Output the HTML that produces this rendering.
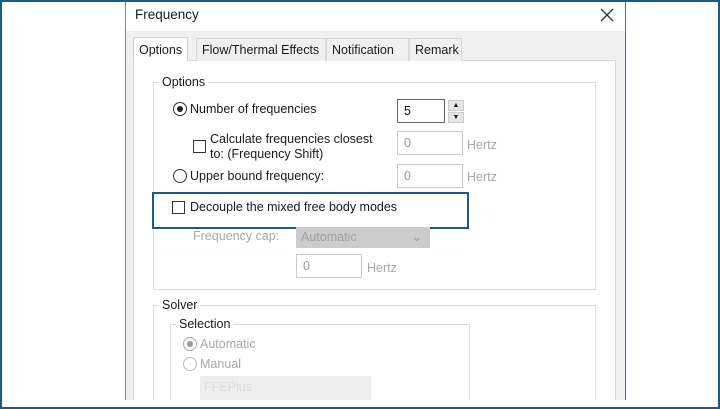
<!DOCTYPE html>
<html style="width:720px;height:409px;overflow:hidden"><head><meta charset="utf-8"><style>
*{margin:0;padding:0;box-sizing:border-box}
body{width:720px;height:409px;background:#fff;position:relative;overflow:hidden;font-family:"Liberation Sans","DejaVu Sans",sans-serif;font-size:12.5px;color:#1a1a1a}
.a{position:absolute}
.frame{left:0;top:0;width:720px;height:409px;border:2px solid #1d5a8c}
.dlg{left:125px;top:2px;width:501px;height:405px;border-left:1px solid #8a8a8a;border-right:1px solid #5a6a7a;background:#f0f0f0}
.title{left:0;top:0;width:499px;height:29px;background:#fff}
.tab{top:38px;height:23px;border:1px solid #d9d9d9;border-bottom:none;background:#f0f0f0;padding:4px 5px 0;font-size:12.5px}
.panel{left:133px;top:60px;width:483px;height:340px;background:#fff;border:1px solid #d9d9d9;border-bottom:none}
.gb{border:1px solid #dcdcdc}
.lg{background:#fff;padding:0 3px}
.rad{width:14px;height:14px;border:1.5px solid #333;border-radius:50%;background:#fff}
.chk{width:13px;height:13px;border:1px solid #333;background:#fff}
.inp{height:24px;border:1px solid #ccc;background:#fff;color:#999;padding:4px 6px}
.gray{color:#a8a8a8}
</style></head><body>
<div class="a dlg">
 <div class="a title"></div>
 <div class="a" style="left:9px;top:5px;font-size:13.5px">Frequency</div>
 <svg class="a" style="left:474px;top:6px" width="14" height="14" viewBox="0 0 14 14"><path d="M1 1L13 13M13 1L1 13" stroke="#333" stroke-width="1.3"/></svg>
</div>
<div class="a panel"></div>
<div class="a tab" style="left:133px;top:37px;height:24px;background:#fff;border-color:#d0d0d0;padding-top:5px">Options</div>
<div class="a tab" style="left:196px;width:130px">Flow/Thermal Effects</div>
<div class="a tab" style="left:326px;width:83px">Notification</div>
<div class="a tab" style="left:409px;width:53px">Remark</div>

<div class="a gb" style="left:153px;top:82px;width:443px;height:208px"></div>
<div class="a lg" style="left:159px;top:75px">Options</div>
<div class="a rad" style="left:173px;top:102px"><div class="a" style="left:2.5px;top:2.5px;width:6px;height:6px;border-radius:50%;background:#222"></div></div>
<div class="a" style="left:190px;top:102px">Number of frequencies</div>
<div class="a inp" style="left:397px;top:99px;width:48px;border-color:#666;color:#111">5</div>
<div class="a" style="left:448px;top:100px;width:16px;height:11px;background:#e5e5e5;border:1px solid #ccc;font-size:7px;text-align:center;line-height:9px">▲</div>
<div class="a" style="left:448px;top:112px;width:16px;height:11px;background:#e5e5e5;border:1px solid #ccc;font-size:7px;text-align:center;line-height:9px">▼</div>
<div class="a chk" style="left:193px;top:140px"></div>
<div class="a" style="left:210px;top:132px;line-height:15px">Calculate frequencies closest<br>to: (Frequency Shift)</div>
<div class="a inp" style="left:397px;top:131px;width:66px">0</div>
<div class="a gray" style="left:467px;top:138px">Hertz</div>
<div class="a rad" style="left:173px;top:169px"></div>
<div class="a" style="left:190px;top:169px">Upper bound frequency:</div>
<div class="a inp" style="left:397px;top:164px;width:66px">0</div>
<div class="a gray" style="left:467px;top:170px">Hertz</div>
<div class="a" style="left:152px;top:192px;width:317px;height:37px;background:#fff;border:2px solid #1d5a8c"></div>
<div class="a chk" style="left:172px;top:201px"></div>
<div class="a" style="left:190px;top:200px">Decouple the mixed free body modes</div>
<div class="a gray" style="left:193px;top:229px">Frequency cap:</div>
<div class="a" style="left:296px;top:227px;width:134px;height:21px;background:#ccc;color:#a0a0a0;padding:3px 5px">Automatic<span style="position:absolute;right:8px;top:2px">⌄</span></div>
<div class="a inp" style="left:296px;top:254px;width:66px">0</div>
<div class="a gray" style="left:367px;top:261px">Hertz</div>

<div class="a gb" style="left:153px;top:305px;width:443px;height:95px;border-bottom:none"></div>
<div class="a lg" style="left:159px;top:298px">Solver</div>
<div class="a gb" style="left:170px;top:324px;width:300px;height:76px;border-bottom:none"></div>
<div class="a lg" style="left:176px;top:317px">Selection</div>
<div class="a rad" style="left:183px;top:337px;border-color:#aaa"><div class="a" style="left:2.5px;top:2.5px;width:6px;height:6px;border-radius:50%;background:#999"></div></div>
<div class="a gray" style="left:200px;top:337px">Automatic</div>
<div class="a rad" style="left:183px;top:357px;border-color:#bbb"></div>
<div class="a gray" style="left:200px;top:357px">Manual</div>
<div class="a" style="left:200px;top:376px;width:171px;height:24px;background:#eee;color:#ddd;padding:4px">FFEPlus</div>
<div class="a" style="left:0;top:400px;width:720px;height:9px;background:#fff"></div>
<div class="a frame"></div>
</body></html>
